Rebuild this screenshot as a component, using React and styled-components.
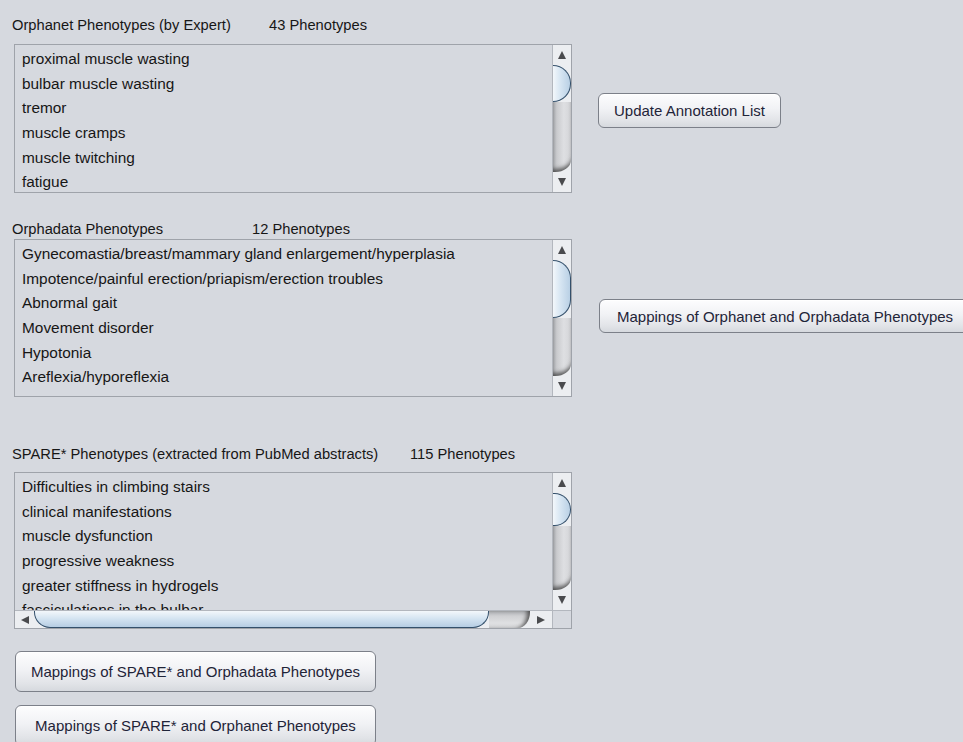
import React from 'react'
import styled, { createGlobalStyle } from 'styled-components'

const GlobalStyle = createGlobalStyle`
  html, body {
    margin: 0;
    padding: 0;
    background: #d6d9df;
    overflow: hidden;
  }
  body {
    font-family: 'Liberation Sans', Arial, sans-serif;
    color: #1e1e1e;
  }
`

const sections = [
  {
    title: 'Orphanet Phenotypes (by Expert)',
    count: '43 Phenotypes',
    labelWidth: 257,
    offset: 0,
    gap: 9,
    height: 149,
    thumb: 37,
    items: [
      'proximal muscle wasting',
      'bulbar muscle wasting',
      'tremor',
      'muscle cramps',
      'muscle twitching',
      'fatigue',
    ],
    action: { label: 'Update Annotation List', top: 78, left: 0, height: 35, pad: 15 },
  },
  {
    title: 'Orphadata Phenotypes',
    count: '12 Phenotypes',
    labelWidth: 240,
    offset: 26,
    gap: 0,
    height: 158,
    thumb: 58,
    items: [
      'Gynecomastia/breast/mammary gland enlargement/hyperplasia',
      'Impotence/painful erection/priapism/erection troubles',
      'Abnormal gait',
      'Movement disorder',
      'Hypotonia',
      'Areflexia/hyporeflexia',
    ],
    action: { label: 'Mappings of Orphanet and Orphadata Phenotypes', top: 80, left: 1, height: 34, pad: 17 },
  },
  {
    title: 'SPARE* Phenotypes (extracted from PubMed abstracts)',
    count: '115 Phenotypes',
    labelWidth: 398,
    offset: 47,
    gap: 8,
    height: 157,
    thumb: 33,
    hscroll: true,
    items: [
      'Difficulties in climbing stairs',
      'clinical manifestations',
      'muscle dysfunction',
      'progressive weakness',
      'greater stiffness in hydrogels',
      'fasciculations in the bulbar',
    ],
  },
]

const App = () => {
  return (
    <>
      <GlobalStyle />
      <Page>
        {sections.map((s, index) => (
          <Row key={index} $offset={s.offset}>
            <Section>
              <TitleRow>
                <Label $width={s.labelWidth}>{s.title}</Label>
                <span>{s.count}</span>
              </TitleRow>
              <ListBox $gap={s.gap} $height={s.height}>
                <Viewport>
                  <List>
                    {s.items.map((item, i) => (
                      <Item key={i}>{item}</Item>
                    ))}
                  </List>
                  <VScroll>
                    <ArrowZone>
                      <Arrow $dir="up" />
                    </ArrowZone>
                    <VTrack>
                      <VThumb $height={s.thumb} />
                      <VRest />
                    </VTrack>
                    <ArrowZone>
                      <Arrow $dir="down" />
                    </ArrowZone>
                  </VScroll>
                </Viewport>
                {s.hscroll && (
                  <HBar>
                    <HScroll>
                      <HArrowZone>
                        <Arrow $dir="left" />
                      </HArrowZone>
                      <HThumb />
                      <HRest />
                      <HArrowZone $wide>
                        <Arrow $dir="right" />
                      </HArrowZone>
                    </HScroll>
                    <Corner />
                  </HBar>
                )}
              </ListBox>
            </Section>
            {s.action && (
              <ActionCell $top={s.action.top} $left={s.action.left}>
                <Button $height={s.action.height} $pad={s.action.pad}>
                  {s.action.label}
                </Button>
              </ActionCell>
            )}
          </Row>
        ))}
        <BottomActions>
          <Button $height={41} $width={361}>
            Mappings of SPARE* and Orphadata Phenotypes
          </Button>
          <Button $height={41} $width={361}>
            Mappings of SPARE* and Orphanet Phenotypes
          </Button>
        </BottomActions>
      </Page>
    </>
  )
}

const Page = styled.div`
  padding: 15px 0 0 12px;
  width: 963px;
  box-sizing: border-box;
`

const Row = styled.div`
  display: flex;
  align-items: flex-start;
  margin-top: ${(p) => p.$offset}px;
`

const Section = styled.div`
  width: 560px;
  flex-shrink: 0;
`

const TitleRow = styled.div`
  display: flex;
  font-size: 14.7px;
  line-height: 20px;
  white-space: nowrap;
  color: #161616;
`

const Label = styled.span`
  width: ${(p) => p.$width}px;
`

const ListBox = styled.div`
  margin: ${(p) => p.$gap}px 0 0 2px;
  width: 558px;
  height: ${(p) => p.$height}px;
  box-sizing: border-box;
  border: 1px solid #9fa3aa;
  display: flex;
  flex-direction: column;
  overflow: hidden;
`

const Viewport = styled.div`
  flex: 1;
  min-height: 0;
  display: flex;
`

const List = styled.ul`
  flex: 1;
  margin: 0;
  padding: 2px 0 0 7px;
  list-style: none;
  overflow: hidden;
`

const Item = styled.li`
  height: 24.7px;
  line-height: 24.7px;
  font-size: 15.4px;
  white-space: nowrap;
  color: #161616;
`

const VScroll = styled.div`
  width: 19px;
  flex-shrink: 0;
  box-sizing: border-box;
  border-left: 1px solid #b3b7be;
  background: #eceef1;
  display: flex;
  flex-direction: column;
`

const ArrowZone = styled.div`
  height: 20px;
  flex-shrink: 0;
  display: flex;
  align-items: center;
  justify-content: center;
`

const Arrow = styled.span`
  width: 0;
  height: 0;
  border-style: solid;
  ${(p) =>
    p.$dir === 'up'
      ? 'border-width: 0 4.5px 8px 4.5px; border-color: transparent transparent #4a4b4e transparent;'
      : p.$dir === 'down'
      ? 'border-width: 8px 4.5px 0 4.5px; border-color: #4a4b4e transparent transparent transparent;'
      : p.$dir === 'left'
      ? 'border-width: 4px 8px 4px 0; border-color: transparent #4a4b4e transparent transparent;'
      : 'border-width: 4px 0 4px 8px; border-color: transparent transparent transparent #4a4b4e;'}
`

const VTrack = styled.div`
  flex: 1;
  display: flex;
  flex-direction: column;
`

const VThumb = styled.div`
  height: ${(p) => p.$height}px;
  flex-shrink: 0;
  box-sizing: border-box;
  border: 1px solid #34506b;
  border-left: none;
  border-radius: 0 18px 18px 0;
  background: linear-gradient(to right, #f3f7fb 0%, #d6e5f2 45%, #b9d0e5 100%);
`

const VRest = styled.div`
  flex: 1;
  border-radius: 0 0 16px 0 / 0 0 12px 0;
  background: linear-gradient(to right, #a8aaae 0%, #cacbce 22%, #dedfe2 60%, #d3d4d7 100%);
  box-shadow: inset 0 -5px 4px -2px rgba(40, 40, 40, 0.7);
`

const HBar = styled.div`
  height: 17px;
  flex-shrink: 0;
  display: flex;
  border-top: 1px solid #b3b7be;
`

const HScroll = styled.div`
  flex: 1;
  display: flex;
  background: #eceef1;
`

const HArrowZone = styled.div`
  width: ${(p) => (p.$wide ? 22 : 19)}px;
  flex-shrink: 0;
  display: flex;
  align-items: center;
  justify-content: center;
`

const HThumb = styled.div`
  width: 455px;
  flex-shrink: 0;
  box-sizing: border-box;
  border: 1px solid #34506b;
  border-top: none;
  border-radius: 0 0 16px 16px / 0 0 16px 16px;
  background: linear-gradient(to bottom, #f3f7fb 0%, #d3e3f1 50%, #b6cde3 100%);
`

const HRest = styled.div`
  flex: 1;
  border-radius: 0 0 12px 0 / 0 0 16px 0;
  background: linear-gradient(to bottom, #abadb1 0%, #cfd0d3 30%, #dfe0e2 70%, #d4d5d7 100%);
  box-shadow: inset -5px 0 4px -2px rgba(40, 40, 40, 0.7);
`

const Corner = styled.div`
  width: 19px;
  flex-shrink: 0;
  box-sizing: border-box;
  border-left: 1px solid #b3b7be;
  background: #d6d9df;
`

const ActionCell = styled.div`
  padding-top: ${(p) => p.$top}px;
  padding-left: ${(p) => 26 + p.$left}px;
`

const Button = styled.button`
  height: ${(p) => p.$height}px;
  width: ${(p) => (p.$width ? `${p.$width}px` : 'auto')};
  padding: 0 ${(p) => p.$pad || 0}px;
  box-sizing: border-box;
  border: 1px solid #7c8089;
  border-radius: 6px;
  background: linear-gradient(to bottom, #fdfdfe 0%, #f1f2f5 45%, #e2e4e8 80%, #d6d9de 100%);
  box-shadow: inset 0 1px 0 #ffffff;
  font-family: 'Liberation Sans', Arial, sans-serif;
  font-size: 15px;
  color: #1f2438;
  white-space: nowrap;
  cursor: pointer;
`

const BottomActions = styled.div`
  margin: 22px 0 0 3px;
  display: flex;
  flex-direction: column;
  align-items: flex-start;
  gap: 13px;
`

export default App
